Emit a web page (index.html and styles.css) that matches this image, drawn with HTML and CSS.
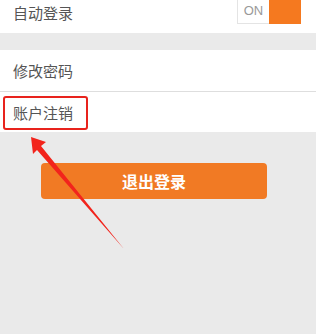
FILE: index.html
```html
<!DOCTYPE html>
<html lang="zh-CN">
<head>
  <meta charset="UTF-8" />
  <meta name="viewport" content="width=device-width, initial-scale=1.0"/>
  <title>设置</title>
  <link rel="stylesheet" href="styles.css">
</head>
<body>
  <div class="settings">
    <div class="row first">
      <span class="label">自动登录</span>
      <div class="toggle">
        <span class="toggle-text">ON</span>
        <span class="toggle-knob"></span>
      </div>
    </div>

    <div class="group">
      <div class="row">
        <span class="label">修改密码</span>
      </div>
      <div class="row">
        <span class="label">账户注销</span>
      </div>
    </div>

    <div class="actions">
      <button class="logout">退出登录</button>
    </div>

    <!-- annotation overlay -->
    <div class="highlight"></div>
    <svg class="arrow" width="316" height="334" viewBox="0 0 316 334">
      <path d="M31 137 L46 142 L41 146 L124 249 L37 150 L33 154 Z" fill="#f2241c"/>
    </svg>
  </div>
</body>
</html>
```

FILE: styles.css
```css
body {
  margin: 0;
  background: #eaeaea;
  font-family: "Noto Sans CJK SC", "Noto Sans", sans-serif;
  color: #555;
}
.settings {
  position: relative;
  width: 316px;
  height: 334px;
  overflow: hidden;
}
.row {
  display: flex;
  align-items: center;
  justify-content: space-between;
  height: 41px;
  padding: 0 0 0 13px;
  background: #fff;
  border-bottom: 1px solid #dedede;
}
.row:last-child {
  height: 40px;
  border-bottom: none;
}
.row.first {
  height: 33px;
  align-items: flex-start;
  border-bottom: none;
  padding-right: 15px;
}
.row.first .label {
  line-height: 26px;
}
.label {
  font-size: 15px;
}
.group {
  margin-top: 17px;
}
.toggle {
  display: flex;
  height: 24px;
}
.toggle-text {
  width: 31px;
  border: 1px solid #e4e4e4;
  border-top: none;
  border-right: none;
  font-family: "Liberation Sans", sans-serif;
  font-size: 13px;
  color: #999;
  text-align: center;
  line-height: 22px;
}
.toggle-knob {
  width: 32px;
  background: #f5791f;
}
.actions {
  padding: 31px 0 0 41px;
}
.logout {
  width: 226px;
  height: 36px;
  border: none;
  border-radius: 4px;
  background: #f17a24;
  color: #fff;
  font-family: "Noto Sans CJK SC", sans-serif;
  font-size: 16px;
  font-weight: bold;
  letter-spacing: 0;
}
.highlight {
  position: absolute;
  left: 3px;
  top: 96px;
  width: 81px;
  height: 30px;
  border: 2px solid #e8231d;
  border-radius: 3px;
}
.arrow {
  position: absolute;
  left: 0;
  top: 0;
}
```
